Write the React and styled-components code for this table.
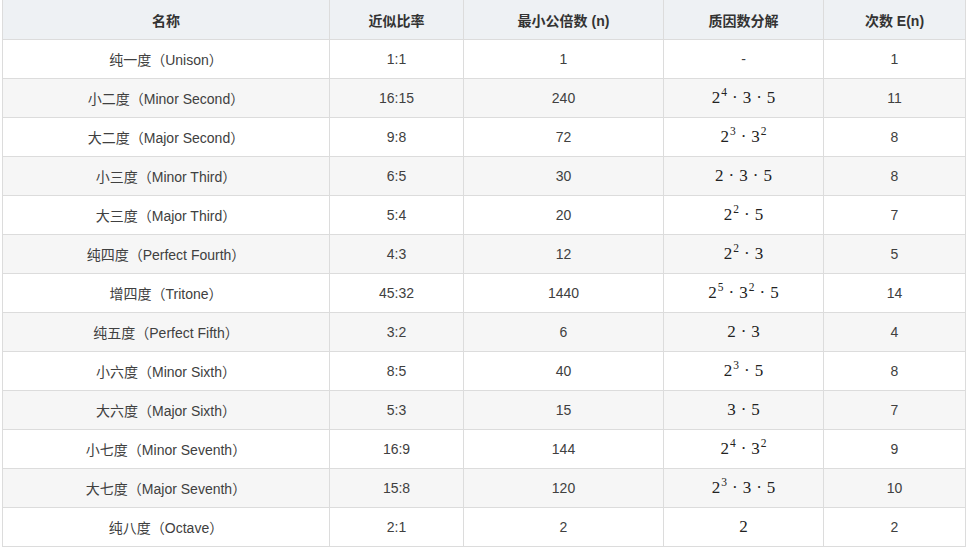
import React from 'react';
import styled, { createGlobalStyle } from 'styled-components';

const GlobalStyle = createGlobalStyle`
  html, body {
    margin: 0;
    padding: 0;
    background: #fff;
  }
`;

const Wrap = styled.div`
  padding: 0 4px 0 2px;
  margin-top: -1px;
`;

const Table = styled.table`
  width: 963px;
  table-layout: fixed;
  border-collapse: collapse;
  font-family: "Liberation Sans", Arial, "Noto Sans CJK SC", sans-serif;
  font-size: 14px;
  color: #404040;
`;

const HeadCell = styled.th`
  height: 40px;
  padding: 0 8px;
  box-sizing: border-box;
  border: 1px solid #dcdcdc;
  background: #eef1f4;
  font-weight: bold;
  color: #333;
  text-align: center;
`;

const Row = styled.tr`
  background: ${({ $striped }) => ($striped ? '#f6f6f6' : '#fff')};
`;

const Cell = styled.td`
  height: 39px;
  padding: 0 8px;
  box-sizing: border-box;
  border: 1px solid #dcdcdc;
  text-align: center;
`;

const MathCell = styled(Cell)`
  font-family: "Liberation Serif", "Times New Roman", serif;
  font-size: 17px;
  color: #222;
`;

const Sup = styled.sup`
  font-size: 11.5px;
  vertical-align: 0;
  position: relative;
  top: -7px;
  margin-left: 1px;
`;

const Dot = styled.span`
  margin: 0 5px;
`;

// factor list: [base, exponent]
const rows = [
  ['纯一度（Unison）', '1:1', '1', null, '1'],
  ['小二度（Minor Second）', '16:15', '240', [[2, 4], [3], [5]], '11'],
  ['大二度（Major Second）', '9:8', '72', [[2, 3], [3, 2]], '8'],
  ['小三度（Minor Third）', '6:5', '30', [[2], [3], [5]], '8'],
  ['大三度（Major Third）', '5:4', '20', [[2, 2], [5]], '7'],
  ['纯四度（Perfect Fourth）', '4:3', '12', [[2, 2], [3]], '5'],
  ['增四度（Tritone）', '45:32', '1440', [[2, 5], [3, 2], [5]], '14'],
  ['纯五度（Perfect Fifth）', '3:2', '6', [[2], [3]], '4'],
  ['小六度（Minor Sixth）', '8:5', '40', [[2, 3], [5]], '8'],
  ['大六度（Major Sixth）', '5:3', '15', [[3], [5]], '7'],
  ['小七度（Minor Seventh）', '16:9', '144', [[2, 4], [3, 2]], '9'],
  ['大七度（Major Seventh）', '15:8', '120', [[2, 3], [3], [5]], '10'],
  ['纯八度（Octave）', '2:1', '2', [[2]], '2'],
];

const Factors = ({ list }) =>
  list.map(([base, exp], i) => (
    <React.Fragment key={i}>
      {i > 0 && <Dot>·</Dot>}
      {base}
      {exp && <Sup>{exp}</Sup>}
    </React.Fragment>
  ));

const App = () => (
  <Wrap>
    <GlobalStyle />
    <Table>
      <colgroup>
        <col style={{ width: 327 }} />
        <col style={{ width: 134 }} />
        <col style={{ width: 200 }} />
        <col style={{ width: 160 }} />
        <col style={{ width: 142 }} />
      </colgroup>
      <thead>
        <tr>
          <HeadCell>名称</HeadCell>
          <HeadCell>近似比率</HeadCell>
          <HeadCell>最小公倍数 (n)</HeadCell>
          <HeadCell>质因数分解</HeadCell>
          <HeadCell>次数 E(n)</HeadCell>
        </tr>
      </thead>
      <tbody>
        {rows.map(([name, ratio, lcm, factors, e], i) => (
          <Row key={i} $striped={i % 2 === 1}>
            <Cell>{name}</Cell>
            <Cell>{ratio}</Cell>
            <Cell>{lcm}</Cell>
            {factors ? (
              <MathCell>
                <Factors list={factors} />
              </MathCell>
            ) : (
              <Cell>-</Cell>
            )}
            <Cell>{e}</Cell>
          </Row>
        ))}
      </tbody>
    </Table>
  </Wrap>
);

export default App;
